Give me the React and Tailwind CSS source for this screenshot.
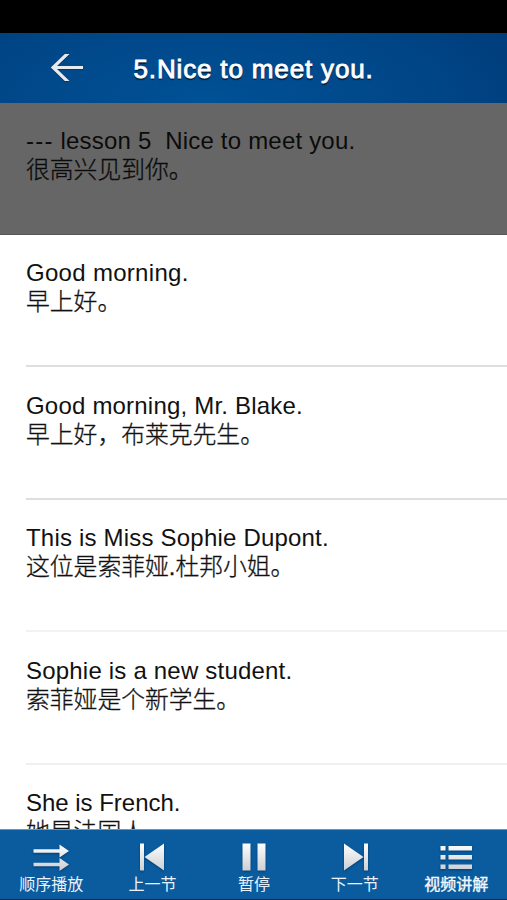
const lines = [
  ["Good morning.", "早上好。", "border-[#dedede]", "tracking-[0.3px]"],
  ["Good morning, Mr. Blake.", "早上好，布莱克先生。", "border-[#dedede]", "tracking-[0.2px]"],
  ["This is Miss Sophie Dupont.", "这位是索菲娅.杜邦小姐。", "border-[#f2f2f2]", "tracking-[0.2px]"],
  ["Sophie is a new student.", "索菲娅是个新学生。", "border-[#efefef]", "tracking-[0.2px]"],
  ["She is French.", "她是法国人。", "border-[#e5e5e5]", "tracking-[-0.02px]"],
];

function Line({ en, zh, tracking }) {
  return (
    <>
      <p className={`h-[29px] whitespace-pre text-[24px] leading-[29px] ${tracking}`}>{en}</p>
      <p className="h-[29px] whitespace-pre font-['Liberation_Sans','Noto_Sans_CJK_SC',sans-serif] text-[23.8px] font-light leading-[29px] [-webkit-text-stroke:0.3px_currentColor]">{zh}</p>
    </>
  );
}

function Shuffle() {
  return (
    <g>
      <path d="M7.500 10.300h26V5.500l9.500 6.500-9.500 6.500v-4.800h-26z" />
      <path d="M7.500 23.800h26V19l9.500 6.500-9.500 6.500v-4.800h-26z" />
    </g>
  );
}
function Previous() {
  return <path d="M13 4.500h4v27h-4zM37 4.500v27L17.500 18z" />;
}
function Pause() {
  return <path d="M14.500 4.500h8v27h-8zM29.500 4.500h8v27h-8z" />;
}
function Next() {
  return <path d="M14 4.500v27L33.500 18zM34 4.500h4v27h-4z" />;
}
function List() {
  return <path d="M9.500 7h5v4.500h-5zM17.500 7H41v4.500H17.500zM9.500 16h5v4.500h-5zM17.500 16H41v4.500H17.500zM9.500 25.500h5V30h-5zM17.500 25.500H41V30H17.500z" />;
}

const tabs = [
  [Shuffle, "顺序播放", "pl-px"],
  [Previous, "上一节", "pl-px"],
  [Pause, "暂停", "pl-px"],
  [Next, "下一节", ""],
  [List, "视频讲解", "[-webkit-text-stroke:0.35px_white]"],
];

export default function App() {
  return (
    <div className="flex h-[900px] w-[507px] flex-col overflow-hidden bg-white font-['Liberation_Sans','Noto_Sans_CJK_SC',sans-serif] text-[#111]">
      <div className="h-[33px] shrink-0 bg-black" />
      <header className="flex h-[70px] shrink-0 items-center bg-[#004a8b] bg-[radial-gradient(ellipse_380px_150px_at_40%_100%,#005196_0%,#004687_60%,#003a78_100%)] pl-[50px]">
        <svg className="h-[30px] w-[34px] drop-shadow-[0_1px_0_#00396e]" viewBox="0 0 34 30" fill="#e8ebee">
          <path d="M.8 14.500 14.800 1h4.700L7 13h26v3H7l12.500 12h-4.700z" />
        </svg>
        <h1 className="ml-[49.5px] whitespace-nowrap pt-[2px] text-[26px] leading-[32px] tracking-[0.85px] text-white [-webkit-text-stroke:0.85px_white] [text-shadow:0_2px_1px_#001c38]">
          5.Nice to meet you.
        </h1>
      </header>
      <main className="min-h-0 flex-1 overflow-hidden">
        <section className="h-[132px] border-b border-[#585858] bg-[#666] pl-[26px] pt-[23px] text-[#0b0b0b]">
          <Line
            en={<><span className="tracking-[1.2px]">---</span>{" lesson 5  Nice to meet you."}</>}
            zh="很高兴见到你。"
            tracking="tracking-[0.2px]"
          />
        </section>
        {lines.map(([en, zh, border, tracking]) => (
          <section key={en} className={`ml-[26px] h-[132.4px] border-b-2 pt-[23.4px] ${border}`}>
            <Line en={en} zh={zh} tracking={tracking} />
          </section>
        ))}
      </main>
      <nav className="flex h-[71px] shrink-0 border-t border-b border-t-[#5d9bd0] border-b-[#063056] bg-[#0a5c9f]">
        {tabs.map(([Icon, label, extra]) => (
          <button key={label} className="flex w-[101.4px] flex-col items-center pt-[9px]">
            <svg className="h-[36px] w-[50px] drop-shadow-[0_1px_1px_#003d73]" viewBox="0 0 50 36">
              <defs>
                <linearGradient id={label} gradientUnits="userSpaceOnUse" x1="0" x2="0" y1="4" y2="32">
                  <stop stopColor="#fff" />
                  <stop offset="1" stopColor="#ccced2" />
                </linearGradient>
              </defs>
              <g fill={`url(#${label})`}><Icon /></g>
            </svg>
            <span className={`-mt-[2px] whitespace-nowrap text-[16px] leading-[23px] text-[#eaf3fb] ${extra}`}>{label}</span>
          </button>
        ))}
      </nav>
    </div>
  );
}
